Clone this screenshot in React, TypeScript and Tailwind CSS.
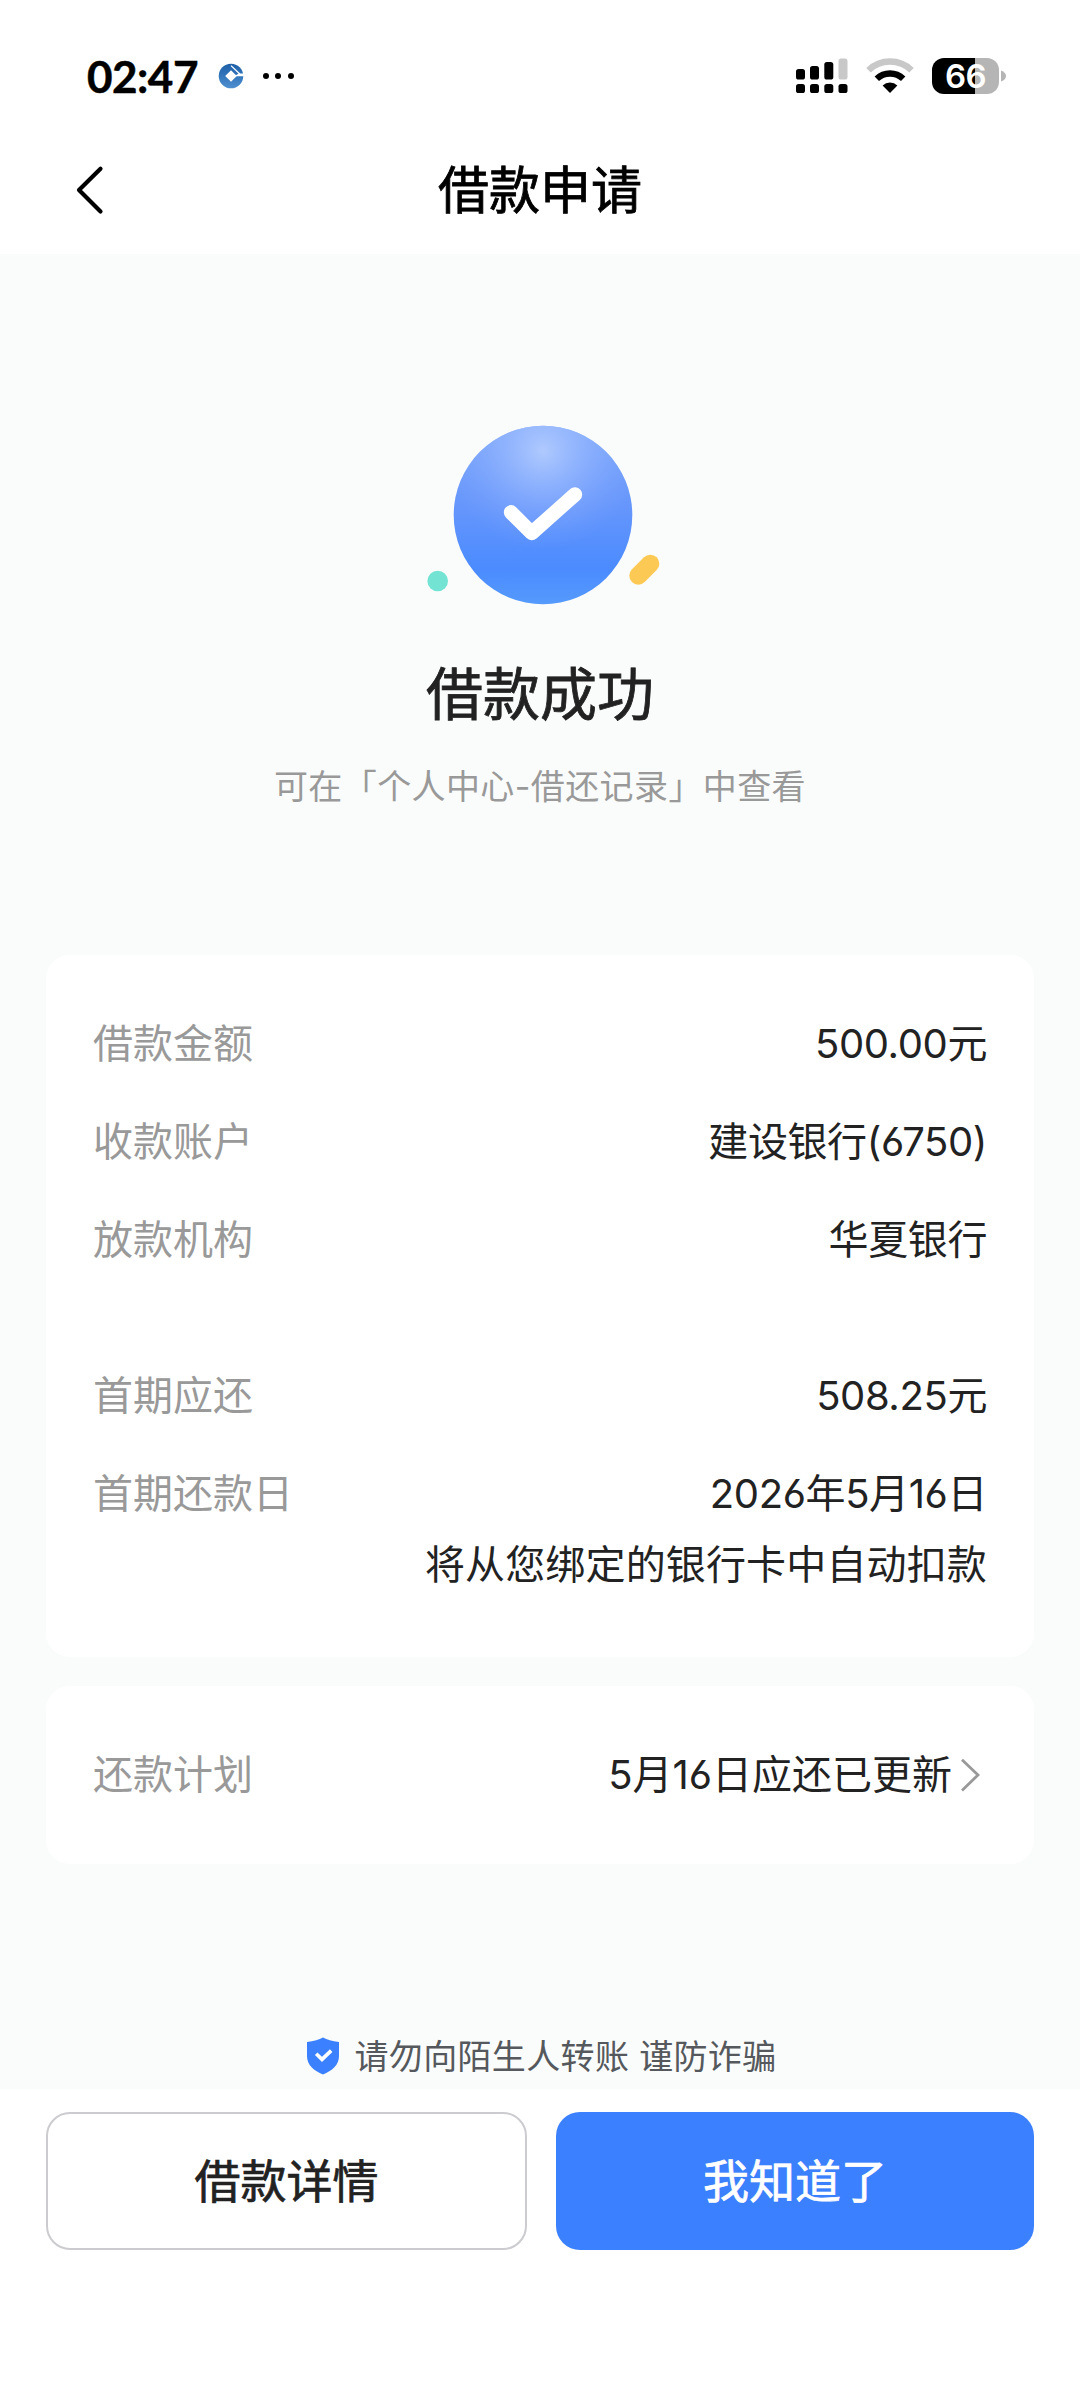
import React from 'react';

type Detail = {
    label: string;
    value: string;
    note?: string;
};

const loanDetails: Detail[] = [
    { label: '借款金额', value: '500.00元' },
    { label: '收款账户', value: '建设银行(6750)' },
    { label: '放款机构', value: '华夏银行' },
];

const repayDetails: Detail[] = [
    { label: '首期应还', value: '508.25元' },
    { label: '首期还款日', value: '2026年5月16日', note: '将从您绑定的银行卡中自动扣款' },
];

const BankLogo = () => (
    <svg width="26" height="26" viewBox="0 0 26 26">
        <defs>
            <linearGradient id="bank" x1="0" y1="0" x2="0" y2="1">
                <stop offset="0" stopColor="#1c5fa8" />
                <stop offset="1" stopColor="#4e8fd0" />
            </linearGradient>
        </defs>
        <circle cx="13" cy="13" r="12.3" fill="url(#bank)" />
        <path d="M13 7.2 18.8 13 13 18.8 7.2 13Z" fill="#fff" />
        <path d="M17.6 12.6 20.6 10.6H26V13.2H18Z" fill="#fff" />
        <path d="M13 2.6 21.8 11" stroke="#fff" strokeWidth="1.3" />
    </svg>
);

const SignalIcon = () => (
    <svg width="52" height="36" viewBox="0 0 52 36">
        <rect x="0" y="11" width="9" height="10.5" rx="2.6" />
        <rect x="14" y="8" width="9" height="13.5" rx="2.6" />
        <rect x="28.3" y="4" width="9" height="17.5" rx="2.6" />
        <rect x="42.5" y="0.5" width="9" height="21" rx="2.6" fill="#c8c8c8" />
        <rect x="0" y="26" width="9" height="9" rx="2.6" />
        <rect x="14" y="26" width="9" height="9" rx="2.6" />
        <rect x="28.3" y="26" width="9" height="9" rx="2.6" />
        <rect x="42.5" y="26" width="9" height="9" rx="2.6" />
    </svg>
);

const WifiIcon = () => (
    <svg width="48" height="36" viewBox="0 0 48 36" fill="none">
        <path d="M2.5 12.2A31 31 0 0 1 45.5 12.2" stroke="#c8c8c8" strokeWidth="6.4" />
        <path d="M10.8 20.7A19.2 19.2 0 0 1 37.2 20.7" stroke="#000" strokeWidth="6.4" />
        <path d="M24 35 16.6 27.6A10.6 10.6 0 0 1 31.4 27.6Z" fill="#000" />
    </svg>
);

const StatusBar = () => (
    <div className="flex h-[126px] items-center justify-between pt-[26px] pr-[74px] pl-[87px] text-black">
        <div className="flex items-center">
            <span className="w-[112px] font-['Lato',sans-serif] text-[44px] leading-none font-bold tracking-[-0.5px] [-webkit-text-stroke:0.5px_black]">02:47</span>
            <div className="ml-[19px]">
                <BankLogo />
            </div>
            <div className="ml-[19px] flex gap-[6.3px]">
                <i className="size-[6px] rounded-full bg-black" />
                <i className="size-[6px] rounded-full bg-black" />
                <i className="size-[6px] rounded-full bg-black" />
            </div>
        </div>
        <div className="flex items-center">
            <SignalIcon />
            <div className="ml-[18px]">
                <WifiIcon />
            </div>
            <div className="ml-[18px] flex h-[36px] w-[67px] items-center justify-center rounded-[12px] bg-linear-to-r from-black from-64% to-[#b5b5b5] to-64%">
                <span className="font-['Inter',sans-serif] text-[33px] leading-none font-semibold tracking-[-0.5px] text-white [font-feature-settings:normal]">66</span>
            </div>
            <svg className="ml-[2px]" width="5" height="12" viewBox="0 0 5 12">
                <path d="M0 0.5Q5 2.5 5 6T0 11.5Z" fill="#b5b5b5" />
            </svg>
        </div>
    </div>
);

const Header = () => (
    <div className="grid h-[128px] grid-cols-[200px_1fr_200px] items-center">
        <svg className="ml-[75px]" width="30" height="50" viewBox="0 0 30 50" fill="none">
            <path d="M25.5 3.8 4 25 25.5 46.5" stroke="#000" strokeWidth="4.2" strokeLinecap="round" strokeLinejoin="round" />
        </svg>
        <h1 className="text-center text-[51px] leading-none text-black [-webkit-text-stroke:0.8px_black]">借款申请</h1>
    </div>
);

const SuccessIcon = () => (
    <svg width="240" height="190" viewBox="0 0 240 190">
        <defs>
            <linearGradient id="ball" x1="0" y1="0" x2="0" y2="1">
                <stop offset="0" stopColor="#7fa8fb" />
                <stop offset="0.45" stopColor="#6696fc" />
                <stop offset="0.8" stopColor="#4b8bff" />
                <stop offset="1" stopColor="#559afc" />
            </linearGradient>
            <radialGradient id="shine" cx="0.5" cy="0.14" r="0.55">
                <stop offset="0" stopColor="#b0cafe" />
                <stop offset="1" stopColor="#7ea6fe" stopOpacity="0" />
            </radialGradient>
        </defs>
        <circle cx="123" cy="95" r="89.3" fill="url(#ball)" />
        <circle cx="123" cy="95" r="89.3" fill="url(#shine)" />
        <path d="M91 92.3 111.7 113 155 74.5" fill="none" stroke="#fff" strokeWidth="14.4" strokeLinecap="round" strokeLinejoin="round" />
        <circle cx="17.7" cy="161" r="10.3" fill="#73e3d4" />
        <path d="M218.3 155.7 230.3 143.7" stroke="#fdc955" strokeWidth="18" strokeLinecap="round" />
    </svg>
);

const Row = ({ label, value, note }: Detail) => (
    <div>
        <div className="flex h-[98px] items-center justify-between">
            <span className="text-[#999]">{label}</span>
            <span className="tracking-[-0.4px]">{value}</span>
        </div>
        {note && <p className="h-11 text-right leading-[44px] tracking-[0.15px]">{note}</p>}
    </div>
);

const ShieldIcon = () => (
    <svg width="32" height="38" viewBox="0 0 32 38" fill="none">
        <path d="M16 0.6C20 2.8 25 4.2 32 5V19C32 28 25 34 16 37.4 7 34 0 28 0 19V5C7 4.2 12 2.8 16 0.6Z" fill="#3b80ff" />
        <path d="M9.2 16.8 15 22.4 24.2 13.6" stroke="#fff" strokeWidth="3.6" />
    </svg>
);

const App = () => {
    return (
        <div className="flex h-[2400px] w-[1080px] flex-col bg-white font-['Inter','Noto_Sans_CJK_SC',sans-serif] text-[40px] text-[#222] [font-feature-settings:'cv03']">
            <StatusBar />
            <Header />

            <main className="flex h-[1835px] flex-col items-center bg-[#fafcfb] px-[46px] pt-[166px]">
                <SuccessIcon />
                <h2 className="mt-[53px] text-[57px] leading-[64px] [-webkit-text-stroke:0.8px_#222]">借款成功</h2>
                <p className="mt-[35px] text-[34px] leading-[50px] tracking-[0.4px] text-[#999]">可在「个人中心-借还记录」中查看</p>

                <section className="mt-[143px] h-[702px] w-full rounded-[24px] bg-white px-[47px] pt-[40px]">
                    {loanDetails.map((item) => (
                        <Row key={item.label} {...item} />
                    ))}
                    <div className="h-[58px]" />
                    {repayDetails.map((item) => (
                        <Row key={item.label} {...item} />
                    ))}
                </section>

                <section className="mt-[29px] flex h-[178px] w-full items-center justify-between rounded-[24px] bg-white px-[47px]">
                    <span className="text-[#999]">还款计划</span>
                    <div className="flex items-center pr-[7px]">
                        <span>5月16日应还已更新</span>
                        <svg className="ml-[8px]" width="20" height="34" viewBox="0 0 20 34" fill="none">
                            <path d="M2 1.8 18 17 2 32.4" stroke="#999" strokeWidth="2.8" />
                        </svg>
                    </div>
                </section>

                {/* Anti-fraud reminder */}
                <div className="mt-auto mb-[8px] flex h-[50px] items-center gap-[15px] pl-[4px] text-[34px] tracking-[0.35px] text-[#55585c]">
                    <ShieldIcon />
                    <span>请勿向陌生人转账 谨防诈骗</span>
                </div>
            </main>

            <footer className="flex gap-[29px] px-[46px] pt-[23px] text-[46px]">
                <button className="h-[138px] w-[481px] rounded-[24px] border-2 border-[#cbcbd0] bg-white [-webkit-text-stroke:0.7px_#222]">借款详情</button>
                <button className="h-[138px] flex-1 rounded-[24px] bg-[#3b80ff] text-white [-webkit-text-stroke:0.7px_white]">我知道了</button>
            </footer>
        </div>
    );
};

export default App;
